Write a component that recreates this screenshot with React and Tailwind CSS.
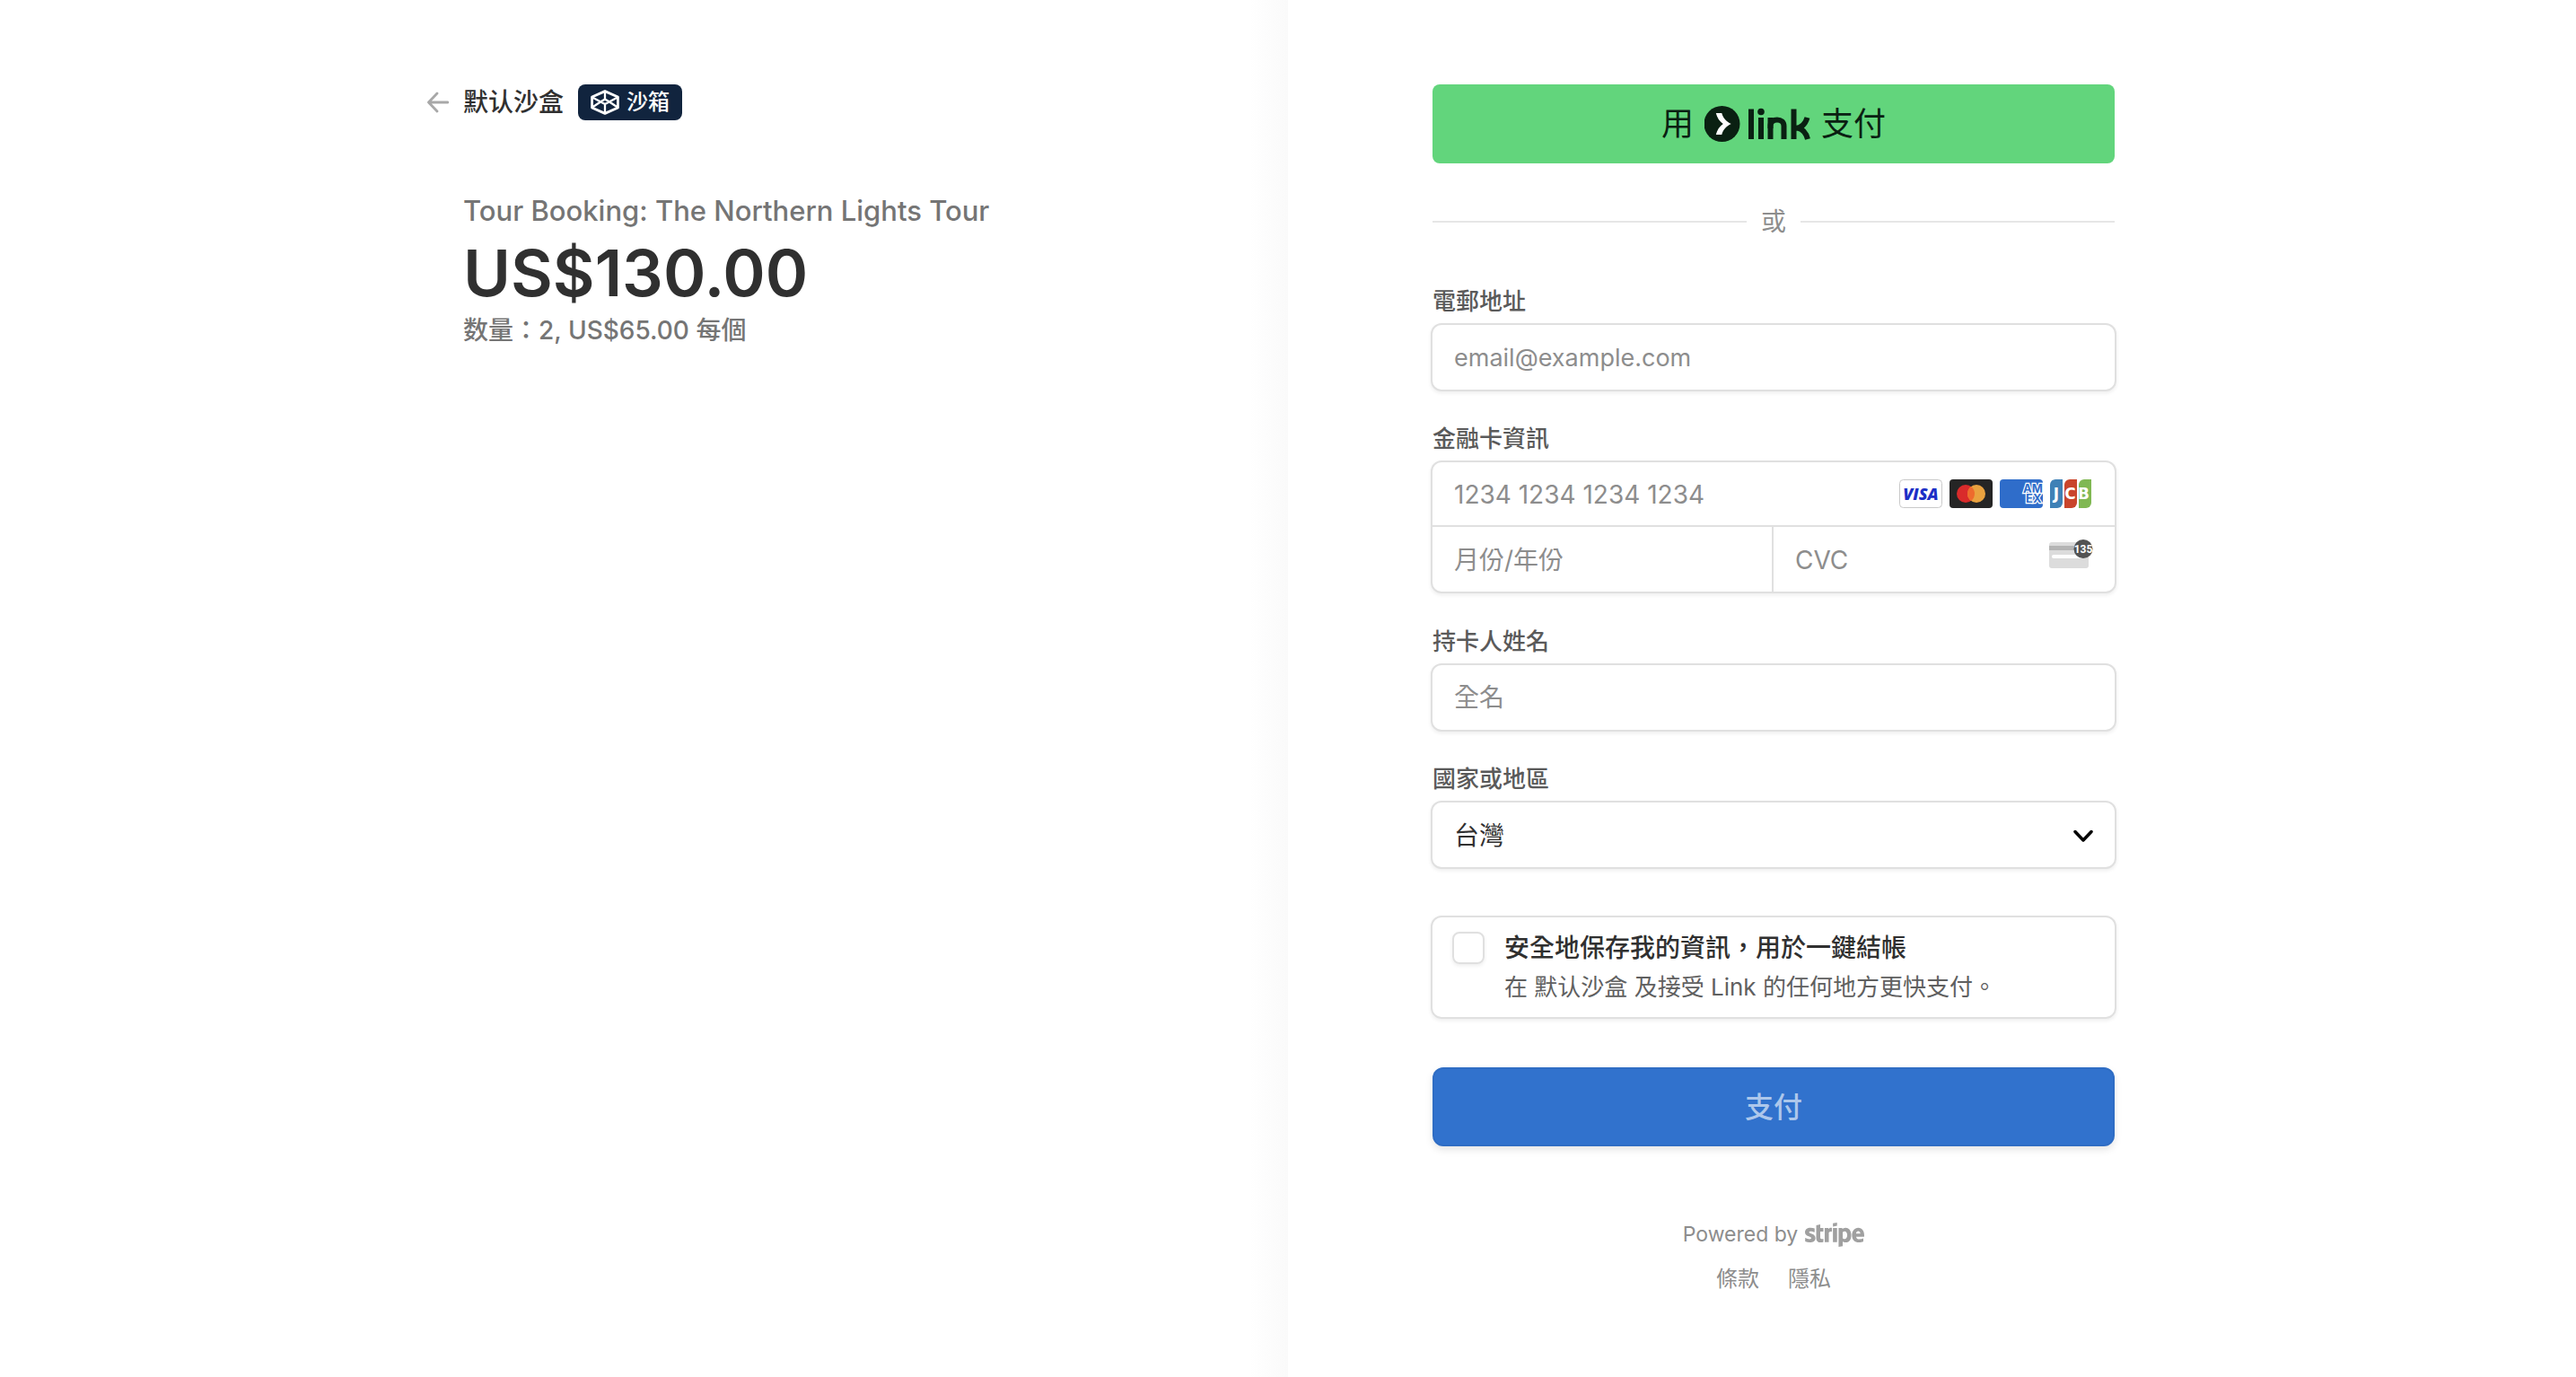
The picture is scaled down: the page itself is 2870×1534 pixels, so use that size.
import { useId } from "react";
import { FaStripe } from "react-icons/fa";

const field =
  "block w-full h-19 rounded-xl border-2 border-[#e0e0e0] bg-white px-6 leading-9 text-[#303030] shadow-[0_2px_4px_rgba(0,0,0,0.07)] outline-none placeholder:text-[#8d8d8d] placeholder:opacity-100";
const inner =
  "h-full w-full min-w-0 bg-transparent px-6 pt-0.5 text-[28px] leading-9 outline-none placeholder:text-[#8d8d8d] placeholder:opacity-100";
const labelText = "mb-[3px] block pl-0.5 text-[26px] leading-[42px] font-medium text-[#5a5a5a]";

function BackArrow() {
  return (
    <svg className="h-6 w-6" viewBox="0 0 24 24" fill="none" stroke="#a8a8a8" strokeWidth="2.800" strokeLinecap="round" strokeLinejoin="round">
      <path d="M11 2 1.500 12 11 22M2 12h21" />
    </svg>
  );
}

function BoxIcon() {
  return (
    <svg className="h-7 w-8" viewBox="0 0 32 28" fill="none" stroke="#fff" strokeWidth="2.800" strokeLinejoin="round" strokeLinecap="round">
      <path d="M16 1.600 30.400 8V20L16 26.400 1.600 20V8Z" />
      <g strokeWidth="2.300">
        <path d="M2 8.500 16 16 30 8.500M16 16v10M16 2V10M2 19.500 11 13.500M30 19.500 21 13.500M11 13.500 16 10.500l5 3" />
      </g>
    </svg>
  );
}

function LinkMark() {
  return (
    <svg className="h-10 w-[118px]" viewBox="0 0 118 40">
      <circle cx="19.500" cy="20" r="20" fill="#0a2012" />
      <path d="M12.800 8h6.500c1.300 5.200 5 9.400 10.400 12-5.400 2.600-9.100 6.800-10.400 12h-6.500c1.100-5 4.200-9.400 8-12-3.800-2.600-6.900-7-8-12Z" fill="#fff" />
      <g stroke="#0a2012" strokeWidth="6" fill="none">
        <path d="M52 3.500V37M63 13V37M73.500 37V13M99.500 3.500V37" />
        <path d="M73.500 25V22C73.500 18 76.500 15.500 81 15.500S88.500 18 88.500 22.500V37" />
        <path d="M101 25C108 24.500 112.500 20 114.500 13M104 24.500C110 26 113.500 31 115 37" />
      </g>
      <circle cx="63" cy="6.500" r="3.800" fill="#0a2012" />
    </svg>
  );
}

function Visa() {
  return (
    <svg className="h-8 w-12" viewBox="0 0 48 32">
      <rect x=".5" y=".5" width="47" height="31" rx="4" fill="#fff" stroke="#c9c9c9" />
      <text x="24" y="22.500" textAnchor="middle" fontSize="18" fontWeight="800" fontStyle="italic" fill="#1c2fc6" fontFamily="Open Sans, sans-serif">VISA</text>
    </svg>
  );
}

function Mastercard() {
  return (
    <svg className="h-8 w-12" viewBox="0 0 48 32">
      <rect width="48" height="32" rx="4" fill="#252525" />
      <circle cx="18" cy="16" r="10" fill="#d92b2b" />
      <circle cx="30" cy="16" r="10" fill="#e9a23f" />
      <path d="M24 8a10 10 0 0 1 0 16a10 10 0 0 1 0-16Z" fill="#ee6b2d" />
    </svg>
  );
}

function Amex() {
  return (
    <svg className="h-8 w-12" viewBox="0 0 48 32">
      <rect width="48" height="32" rx="4" fill="#2f6dca" />
      <text fontFamily="Inter, sans-serif" fontSize="13" fontWeight="700" fill="#2f6dca" stroke="#fff" strokeWidth="2.400" paintOrder="stroke">
        <tspan x="26" y="15">AM</tspan>
        <tspan x="29" y="26">EX</tspan>
      </text>
    </svg>
  );
}

function Jcb() {
  return (
    <svg className="h-8 w-12" viewBox="0 0 48 32">
      <path d="M6 0h8v26a6 6 0 0 1-6 6H0V6a6 6 0 0 1 6-6Z" fill="#3f81b6" />
      <path d="M22 0h8v26a6 6 0 0 1-6 6h-8V6a6 6 0 0 1 6-6Z" fill="#c9452b" />
      <path d="M38 0h8v26a6 6 0 0 1-6 6h-8V6a6 6 0 0 1 6-6Z" fill="#80b853" />
      <text fontFamily="DejaVu Sans, sans-serif" fontSize="17" fontWeight="700" fill="#fff" textAnchor="middle">
        <tspan x="7" y="22">J</tspan>
        <tspan x="22.500" y="22">C</tspan>
        <tspan x="37.500" y="22">B</tspan>
      </text>
    </svg>
  );
}

function CvcCard() {
  return (
    <svg className="h-8 w-[49px]" viewBox="0 0 49 32">
      <rect y="3" width="44" height="29" rx="3" fill="#dcdcdc" />
      <path d="M0 7h44v5H0Z" fill="#b4b4b4" />
      <rect x="3" y="17" width="34" height="4" rx="2" fill="#fff" />
      <circle cx="38" cy="10.500" r="10.500" fill="#535353" />
      <text x="38" y="15" textAnchor="middle" fontSize="12" fontWeight="700" fill="#fff" fontFamily="Roboto, sans-serif">135</text>
    </svg>
  );
}

function Label({ htmlFor, children }) {
  return (
    <label htmlFor={htmlFor} className={labelText}>
      {children}
    </label>
  );
}

export default function App() {
  const id = useId();
  return (
    <div className="grid min-h-screen grid-cols-2 bg-white font-['Inter','Noto_Sans_CJK_TC',sans-serif] text-[#303030]">
      <section lang="zh-Hant" className="flex justify-end bg-linear-to-r from-white from-97% to-[#fafafa] pt-[94px] pr-[159px]">
        <div className="w-full max-w-[800px]">
          <header className="flex h-10 items-center">
            <a href="#back" aria-label="返回" className="mr-4"><BackArrow /></a>
            <span lang="zh-Hans" className="mr-4 font-['Inter','Noto_Sans_CJK_SC',sans-serif] text-[28px] leading-10 font-medium">默认沙盒</span>
            <span className="flex h-10 items-center gap-2 rounded-lg bg-[#11243e] px-3.5 text-[24px] leading-9 font-medium text-white">
              <BoxIcon />
              沙箱
            </span>
          </header>
          <div className="pt-20 pl-10">
            <h1 className="text-[31px] leading-[42px] font-medium text-[#757575]">Tour Booking: The Northern Lights Tour</h1>
            <p className="mt-0.5 text-[72px] leading-23 font-semibold">US$130.00</p>
            <p className="text-[28px] leading-9 font-medium text-[#757575]">数量：2, US$65.00 每個</p>
          </div>
        </div>
      </section>

      <main lang="zh-Hant" className="pt-[94px] pl-[161px]">
        <form className="w-full max-w-[760px]" onSubmit={(e) => e.preventDefault()}>
          <button type="button" className="flex h-22 w-full items-center justify-center gap-3 rounded-lg bg-[#62d57c] text-[36px] leading-10 text-[#0a2012]">
            用
            <LinkMark />
            支付
          </button>

          <div className="mt-[45px] flex h-10 items-center gap-4">
            <span className="h-0.5 flex-1 bg-[#e6e6e6]" />
            <span className="text-[28px] leading-10 text-[#8d8d8d]">或</span>
            <span className="h-0.5 flex-1 bg-[#e6e6e6]" />
          </div>

          <div className="-mx-0.5 mt-12">
            <Label htmlFor={id + "email"}>電郵地址</Label>
            <input id={id + "email"} type="email" placeholder="email@example.com" className={field + " text-[27px]"} />
          </div>

          <fieldset className="-mx-0.5 mt-8">
            <legend className={labelText}>金融卡資訊</legend>
            <div className="rounded-xl border-2 border-[#e0e0e0] bg-white shadow-[0_2px_4px_rgba(0,0,0,0.07)]">
              <div className="flex h-18 items-center border-b-2 border-[#e0e0e0]">
                <input aria-label="卡號" placeholder="1234 1234 1234 1234" className={inner} />
                <div className="mr-6 flex gap-2">
                  <Visa />
                  <Mastercard />
                  <Amex />
                  <Jcb />
                </div>
              </div>
              <div className="grid h-18 grid-cols-2">
                <div className="border-r-2 border-[#e0e0e0]">
                  <input aria-label="到期日" placeholder="月份/年份" className={inner} />
                </div>
                <div className="flex">
                  <input aria-label="安全碼" placeholder="CVC" className={inner} />
                  <span className="mt-3.5 mr-6"><CvcCard /></span>
                </div>
              </div>
            </div>
          </fieldset>

          <div className="-mx-0.5 mt-[33px]">
            <Label htmlFor={id + "name"}>持卡人姓名</Label>
            <input id={id + "name"} placeholder="全名" className={field + " text-[28px]"} />
          </div>

          <div className="-mx-0.5 mt-8">
            <Label htmlFor={id + "country"}>國家或地區</Label>
            <div className="grid items-center">
              <select id={id + "country"} className={field + " col-start-1 row-start-1 appearance-none pt-0.5 text-[28px]"}>
                <option>台灣</option>
              </select>
              <svg className="pointer-events-none col-start-1 row-start-1 mr-6 h-6 w-6 justify-self-end" viewBox="0 0 24 24" fill="none" stroke="#000" strokeWidth="3.500" strokeLinecap="round" strokeLinejoin="round">
                <path d="M2 8.500 11 18 20 8.500" />
              </svg>
            </div>
          </div>

          <div className="-mx-0.5 mt-13 flex gap-[22px] rounded-xl border-2 border-[#e0e0e0] px-[22px] pt-3.5 pb-[13px] shadow-[0_2px_4px_rgba(0,0,0,0.07)]">
            <input id={id + "save"} type="checkbox" className="mt-0.5 h-9 w-9 shrink-0 appearance-none rounded-lg border-2 border-[#e0e0e0] shadow-[0_2px_4px_rgba(0,0,0,0.07)]" />
            <label htmlFor={id + "save"} className="block">
              <span className="block text-[28px] leading-10 font-medium">安全地保存我的資訊，用於一鍵結帳</span>
              <span className="mt-1 block text-[26px] leading-10 text-[#606060]">在 <span lang="zh-Hans" className="font-['Inter','Noto_Sans_CJK_SC',sans-serif]">默认沙盒</span> 及接受 Link 的任何地方更快支付。</span>
            </label>
          </div>

          <button type="submit" className="mt-[54px] flex h-22 w-full items-center justify-center rounded-xl bg-[#3172cd] pt-0.5 text-[32px] leading-10 font-medium text-[#adc7eb] shadow-[0_4px_8px_rgba(0,0,0,0.1),inset_0_0_0_2px_rgba(0,0,0,0.04)]">
            支付
          </button>
        </form>

        <footer className="flex w-full max-w-[760px] flex-col items-center pt-20 text-[#8d8d8d]">
          <a href="#stripe" className="flex h-9 items-center gap-2 text-[23px] leading-9">
            Powered by
            <FaStripe role="img" aria-label="stripe" className="h-[53px] w-[66px] text-[#a0a0a0]" />
          </a>
          <nav className="mt-3.5 flex gap-8 text-[24px] leading-9">
            <a href="#terms">條款</a>
            <a href="#privacy">隱私</a>
          </nav>
        </footer>
      </main>
    </div>
  );
}
